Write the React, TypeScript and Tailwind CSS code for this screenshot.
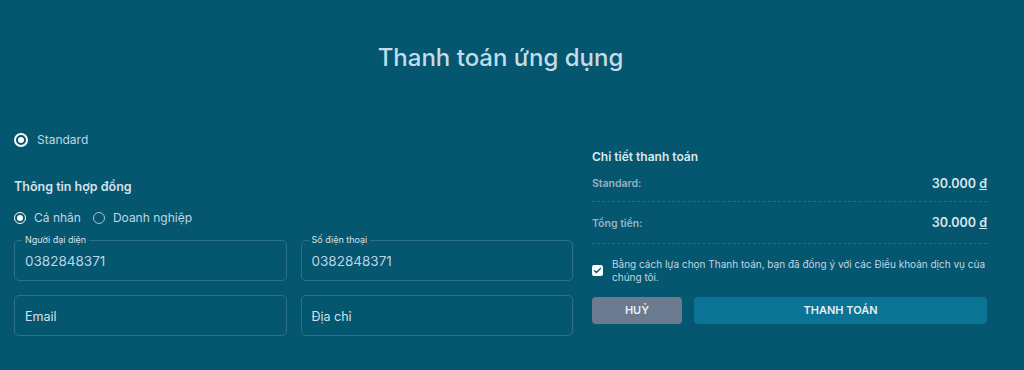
import { useState } from 'react';

export default function App() {
  const [plan, setPlan] = useState('standard');
  const [type, setType] = useState('personal');
  const [agree, setAgree] = useState(true);

  return (
    <div className="min-h-[370px] w-full bg-[#05566f] font-['Inter',sans-serif] text-[#c9dce8]">
      <h1 className="pr-[23px] pt-[41px] text-center text-[24px] font-medium leading-[34px] text-[#c3dbeb]">Thanh toán ứng dụng</h1>

      <div className="mt-[55px] grid grid-cols-[559px_395px] gap-[19px] px-[14px]">
        {/* left */}
        <div>
          <label className="flex h-[20px] cursor-pointer items-center gap-[9px]" onClick={() => setPlan('standard')}>
            <span className="flex h-[14px] w-[14px] items-center justify-center rounded-full border-2 border-white">
              {plan === 'standard' && <span className="h-[6px] w-[6px] rounded-full bg-white" />}
            </span>
            <span className="text-[12px] text-[#c0d6e4]">Standard</span>
          </label>

          <p className="mt-[27px] text-[12.5px] font-semibold leading-[20px] text-[#d3e2ec]">Thông tin hợp đồng</p>

          <div className="mt-[11px] flex h-[20px] items-center text-[12px] text-[#c0d6e4]">
            <label className="flex cursor-pointer items-center gap-[8px]" onClick={() => setType('personal')}>
              <span className="flex h-[12px] w-[12px] items-center justify-center rounded-full border-[1.5px] border-white">
                {type === 'personal' && <span className="h-[6px] w-[6px] rounded-full bg-white" />}
              </span>
              Cá nhân
            </label>
            <label className="ml-[12px] flex cursor-pointer items-center gap-[8px]" onClick={() => setType('business')}>
              <span className="flex h-[12px] w-[12px] items-center justify-center rounded-full border-[1.5px] border-[#a8c3d3]">
                {type === 'business' && <span className="h-[6px] w-[6px] rounded-full bg-white" />}
              </span>
              Doanh nghiệp
            </label>
          </div>

          <div className="mt-[12px] grid grid-cols-2 gap-x-[14px] gap-y-[14px]">
            <Field label="Người đại diện" value="0382848371" />
            <Field label="Số điện thoại" value="0382848371" />
            <Field placeholder="Email" />
            <Field placeholder="Địa chỉ" />
          </div>
        </div>

        {/* right */}
        <div className="pt-[17px]">
          <p className="text-[12px] font-semibold leading-[20px] text-[#dbe7ef]">Chi tiết thanh toán</p>
          <div className="flex h-[35px] items-center justify-between border-b border-dashed border-[#2a6a82]">
            <span className="text-[10.5px] font-semibold text-[#97b3c4]">Standard:</span>
            <span className="text-[12.5px] font-semibold text-[#dbe7ef]">30.000 <u>đ</u></span>
          </div>
          <div className="flex h-[42px] items-center justify-between border-b border-dashed border-[#2a6a82] pt-[2px]">
            <span className="text-[10.5px] font-semibold text-[#97b3c4]">Tổng tiền:</span>
            <span className="text-[12.5px] font-semibold text-[#dbe7ef]">30.000 <u>đ</u></span>
          </div>

          <label className="mt-[14px] flex cursor-pointer items-start gap-[9px]" onClick={() => setAgree(!agree)}>
            <span className="mt-[7px] flex h-[11px] w-[11px] shrink-0 items-center justify-center rounded-[2px] bg-white">
              {agree && (
                <svg viewBox="0 0 12 12" className="h-[9px] w-[9px]">
                  <path d="M2 6.2l2.6 2.5L10 3.3" fill="none" stroke="#05566f" strokeWidth="1.8" strokeLinecap="round" strokeLinejoin="round" />
                </svg>
              )}
            </span>
            <span className="w-[376px] text-[10px] leading-[13px] text-[#c0d6e4]">
              Bằng cách lựa chọn Thanh toán, bạn đã đồng ý với các Điều khoản dịch vụ của chúng tôi.
            </span>
          </label>

          <div className="mt-[13px] flex gap-[12px]">
            <button className="h-[27px] w-[90px] rounded-[4px] bg-[#6b7a8e] text-[11px] font-semibold text-[#e8eef3]">HUỶ</button>
            <button className="h-[27px] flex-1 rounded-[4px] bg-[#0b7394] text-[11px] font-semibold text-[#e8eef3]">THANH TOÁN</button>
          </div>
        </div>
      </div>
    </div>
  );
}

function Field({ label, value, placeholder }: { label?: string; value?: string; placeholder?: string }) {
  return (
    <div className="relative h-[41px] rounded-[5px] border border-[#2f7188]">
      {label && (
        <span className="absolute -top-[7px] left-[7px] bg-[#05566f] px-[3px] text-[9px] leading-[12px] text-[#d6e3ec]">{label}</span>
      )}
      <input
        defaultValue={value}
        placeholder={placeholder}
        className="h-full w-full bg-transparent px-[10px] text-[13.5px] text-[#b9d4e5] outline-none placeholder:text-[12.5px] placeholder:text-[#d3e2ec]"
      />
    </div>
  );
}
